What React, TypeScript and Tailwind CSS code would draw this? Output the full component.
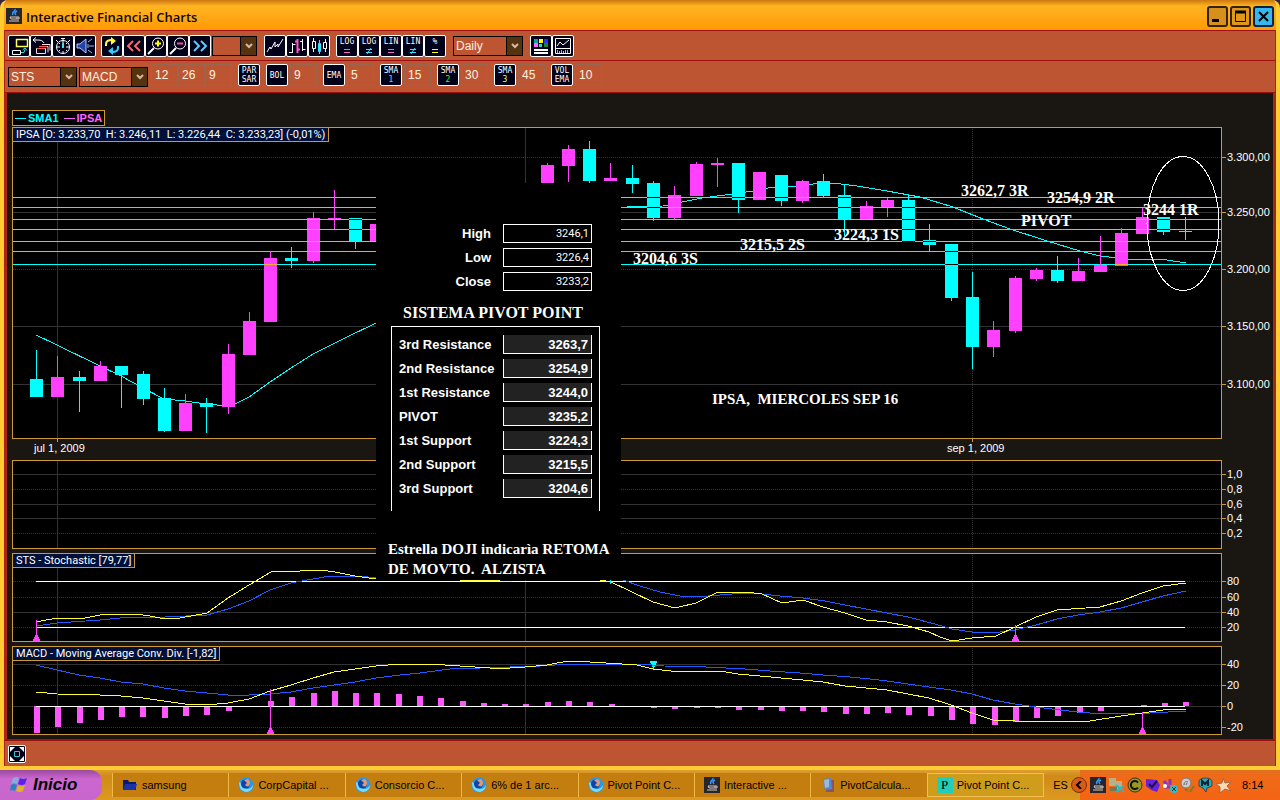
import type { ReactNode } from 'react';

const CYAN = '#00ffff';
const PINK = '#ff40ff';
const FRAME = '#cc9933';
const GRID = '#333333';
const YELLOW = '#ffff33';
const BLUE = '#1f5cff';

const START_X = 36;
const END_X = 1185;

// x, high, body top, body bottom, low, direction
type Candle = [number, number, number, number, number, 'u' | 'd'];

const CANDLES: Candle[] = [
  [36, 350, 379, 397, 397, 'd'],
  [57, 356, 377, 397, 397, 'u'],
  [79, 371, 377, 381, 412, 'd'],
  [100, 361, 366, 381, 381, 'u'],
  [121, 366, 366, 375, 408, 'd'],
  [143, 371, 374, 399, 405, 'd'],
  [164, 388, 398, 431, 432, 'd'],
  [185, 394, 403, 431, 431, 'u'],
  [206, 398, 403, 407, 433, 'd'],
  [228, 344, 354, 407, 414, 'u'],
  [249, 312, 321, 355, 355, 'u'],
  [270, 251, 258, 322, 322, 'u'],
  [291, 247, 258, 261, 268, 'd'],
  [313, 212, 218, 261, 263, 'u'],
  [334, 190, 218, 219, 229, 'u'],
  [355, 218, 218, 241, 249, 'd'],
  [376, 216, 224, 242, 242, 'u'],
  [547, 163, 165, 183, 183, 'u'],
  [568, 145, 149, 166, 182, 'u'],
  [589, 141, 149, 181, 183, 'd'],
  [610, 163, 178, 181, 181, 'u'],
  [632, 165, 178, 184, 193, 'd'],
  [653, 181, 183, 218, 221, 'd'],
  [674, 186, 195, 218, 219, 'u'],
  [696, 162, 164, 196, 196, 'u'],
  [717, 158, 163, 165, 187, 'u'],
  [738, 163, 163, 200, 213, 'd'],
  [759, 172, 172, 200, 200, 'u'],
  [781, 175, 175, 201, 206, 'd'],
  [802, 180, 181, 201, 203, 'u'],
  [823, 174, 181, 196, 198, 'd'],
  [844, 184, 195, 219, 236, 'd'],
  [866, 201, 206, 220, 220, 'u'],
  [887, 198, 200, 208, 217, 'u'],
  [908, 195, 200, 242, 242, 'd'],
  [929, 224, 240, 245, 251, 'd'],
  [951, 244, 244, 298, 301, 'd'],
  [972, 272, 297, 347, 369, 'd'],
  [993, 321, 330, 347, 357, 'u'],
  [1015, 276, 278, 331, 333, 'u'],
  [1036, 268, 270, 279, 281, 'u'],
  [1057, 256, 270, 281, 283, 'd'],
  [1078, 258, 271, 281, 281, 'u'],
  [1100, 236, 265, 272, 272, 'u'],
  [1121, 228, 233, 266, 266, 'u'],
  [1142, 208, 217, 234, 234, 'u'],
  [1163, 217, 217, 232, 235, 'd'],
  [1185, 217, 231, 232, 240, 'd'],
];

const PIVOT_LINES = [197, 207, 219, 229, 241, 251, 264];

const NOTES: [number, number, string][] = [
  [961, 196, '3262,7 3R'],
  [1047, 203, '3254,9 2R'],
  [1143, 215, '3244 1R'],
  [1021, 226, 'PIVOT'],
  [834, 240, '3224,3 1S'],
  [740, 250, '3215,5 2S'],
  [633, 264, '3204,6 3S'],
];

const SMA_LEFT =
  '36,335 57,345 100,366 121,376 143,388 164,399 185,401 206,404 228,406 237,403 249,397 270,382 291,368 313,354 345,338 376,323';
const SMA_RIGHT =
  '627,207 663,206 687,201 702,198 733,194 753,191 768,188 805,186 817,183 833,183 857,186 887,191 920,197 953,207 983,219 1010,229 1047,241 1080,251 1100,256 1127,259 1167,260 1186,263';

const STS_FAST = [
  '36,622 57,618 85,618 100,615 121,614 135,614 150,616 165,619 180,618 207,613 228,598 249,585 271,572 300,571 320,570 335,572 355,576 376,579',
  '460,580 498,580 500,581 512,581',
  '600,580 611,582 632,592 653,602 675,608 696,603 718,592 745,592 762,594 782,603 803,600 823,607 845,613 866,620 887,622 908,626 929,632 940,637 952,641 972,638 996,636 1015,627 1036,617 1057,610 1100,607 1121,601 1142,593 1163,586 1186,583',
];
const STS_SLOW = [
  '36,626 57,623 100,620 130,617 165,617 207,615 228,609 249,601 270,590 291,583 313,579 330,576 360,576 376,578',
  '623,580 640,586 660,592 680,596 696,597 720,595 745,593 762,594 780,596 803,598 825,601 845,605 866,609 887,613 908,617 935,624 952,629 972,632 993,633 1015,630 1036,625 1057,619 1078,615 1100,612 1121,608 1142,602 1163,596 1186,591',
];

const MACD_FAST = [
  '36,692 57,694 100,695 121,696 143,698 164,701 185,704 207,705 228,703 249,699 270,691 291,685 313,678 334,672 355,669 376,666 400,664 430,664 460,666 490,668 510,668 525,667 547,665 568,661 590,662 622,664 637,665 653,669 671,671 720,671 738,674 760,676 781,678 803,680 823,682 845,686 866,688 887,690 908,694 929,698 951,705 972,713 993,720 1015,721 1090,721 1121,716 1142,713 1163,710 1186,709',
];
const MACD_SLOW = [
  '36,665 57,670 79,675 100,678 121,682 143,684 164,688 185,691 207,693 228,695 249,695 270,694 291,692 313,688 334,685 355,682 376,678 400,675 420,673 450,669 480,668 510,667 540,666 570,664 640,664 664,666 706,667 745,669 770,671 800,673 823,675 850,677 870,679 887,681 908,684 929,687 951,690 972,694 993,700 1015,704 1036,707 1060,710 1078,712 1090,713 1150,713 1186,711',
];

// far edge of every histogram bar, the zero line lies at 706
const HISTOGRAM = [
  733, 727, 723, 720, 717, 717, 718, 716, 715, 711, 707, 701, 697, 693, 691, 693, 693, 694, 696, 698, 701, 703, 704, 704,
  702, 701, 702, 704, 706, 708, 709, 708, 708, 710, 710, 711, 711, 712, 714, 714, 713, 715, 716, 720, 724, 725, 722, 718,
  716, 713, 711, 707, 705, 703, 702,
];

type Tick = { y: number; label?: string; dotted?: boolean };

function Plot({ top, height, bottom, ticks, children }: { top: number; height: number; bottom: number; ticks: Tick[]; children?: ReactNode }) {
  return (
    <svg viewBox={`7 ${top} 1266 ${height}`} className="block h-auto w-full font-['Liberation_Sans',sans-serif] text-[11px]">
      <g shapeRendering="crispEdges" fill="none">
        <rect x={12.5} y={top + 0.5} width={1209} height={bottom - top} fill="#000000" />
        <path d={`M57.5 ${top}V${bottom}M525.5 ${top}V${bottom}`} stroke={GRID} />
        <path d={`M972.5 ${top}V${bottom}`} stroke={GRID} strokeDasharray="1 1" />
        {ticks.map((t) => (
          <g key={t.y}>
            <path d={`M13 ${t.y + 0.5}H1221`} stroke={GRID} strokeDasharray={t.dotted ? '1 1' : undefined} />
            <path d={`M1222 ${t.y + 0.5}h4`} stroke={FRAME} />
          </g>
        ))}
      </g>
      {children}
      <rect x={12.5} y={top + 0.5} width={1209} height={bottom - top} fill="none" stroke={FRAME} shapeRendering="crispEdges" />
      {ticks.map((t) => (
        <text key={t.y} x={1227} y={t.y + 4} fill="#ffffff">
          {t.label}
        </text>
      ))}
    </svg>
  );
}

function Curves({ points, color }: { points: string[]; color: string }) {
  return (
    <g fill="none" stroke={color} shapeRendering="crispEdges">
      {points.map((p) => (
        <polyline key={p} points={p} />
      ))}
    </g>
  );
}

function BuySignal({ x, from, base }: { x: number; from: number; base: number }) {
  return (
    <g shapeRendering="crispEdges" fill={PINK}>
      <rect x={x} y={from} width={1} height={base - from} />
      <path d={`M${x - 1} ${base - 6}h3v2h1v2h1v2h-7v-2h1v-2h1z`} />
    </g>
  );
}

function PriceChart() {
  const ticks = [
    { y: 157, label: '3.300,00', dotted: true },
    { y: 212, label: '3.250,00' },
    { y: 269, label: '3.200,00', dotted: true },
    { y: 326, label: '3.150,00' },
    { y: 384, label: '3.100,00' },
  ];
  return (
    <Plot top={127} height={333} bottom={438} ticks={ticks}>
      <g shapeRendering="crispEdges" fill="none">
        {PIVOT_LINES.map((y) => (
          <path key={y} d={`M13 ${y + 0.5}H1221`} stroke={CYAN} />
        ))}
        <polyline points={SMA_LEFT} stroke={CYAN} />
        <polyline points={SMA_RIGHT} stroke={CYAN} />
        {CANDLES.map(([x, high, open, close, low, dir]) => {
          const fill = dir === 'u' ? PINK : CYAN;
          return (
            <g key={x}>
              <rect x={x} y={high} width={1} height={low - high} fill={fill} />
              <rect x={x - 6} y={open} width={13} height={close - open} fill={fill} />
              {PIVOT_LINES.filter((y) => y >= open && y < close).map((y) => (
                <rect key={y} x={x - 6} y={y} width={13} height={1} fill={dir === 'u' ? '#ffaa33' : '#000000'} />
              ))}
            </g>
          );
        })}
        <ellipse cx={1183} cy={223.5} rx={36} ry={67} stroke="#ffffff" />
        <path d="M57.5 438v4M972.5 438v4" stroke={FRAME} />
      </g>
      <g fill="#ffffff">
        <text x={34} y={452}>jul 1, 2009</text>
        <text x={947} y={452}>sep 1, 2009</text>
      </g>
      <g fill="#ffffff" className="font-['Liberation_Serif',serif] text-[16px] font-bold">
        {NOTES.map(([x, y, text]) => (
          <text key={text} x={x} y={y}>
            {text}
          </text>
        ))}
        <text x={712} y={404} className="text-[15px] whitespace-pre">
          {'IPSA,  MIERCOLES SEP 16'}
        </text>
      </g>
    </Plot>
  );
}

function VolumeChart() {
  const ticks = [
    { y: 474, label: '1,0' },
    { y: 489, label: '0,8', dotted: true },
    { y: 504, label: '0,6' },
    { y: 518, label: '0,4' },
    { y: 533, label: '0,2', dotted: true },
  ];
  return <Plot top={460} height={93} bottom={548} ticks={ticks} />;
}

function StochasticChart() {
  const ticks = [
    { y: 581, label: '80', dotted: true },
    { y: 597, label: '60', dotted: true },
    { y: 612, label: '40' },
    { y: 627, label: '20', dotted: true },
  ];
  return (
    <Plot top={553} height={93} bottom={641} ticks={ticks}>
      <path d={`M${START_X} 581.5H${END_X}M${START_X} 627.5H${END_X}`} stroke="#ffffff" shapeRendering="crispEdges" />
      <Curves points={STS_SLOW} color={BLUE} />
      <Curves points={STS_FAST} color={YELLOW} />
      <rect x={610} y={580} width={1} height={4} fill={CYAN} />
      <BuySignal x={36} from={620} base={641} />
      <BuySignal x={1015} from={625} base={641} />
    </Plot>
  );
}

function MacdChart() {
  const ticks = [
    { y: 664, label: '40' },
    { y: 685, label: '20', dotted: true },
    { y: 706, label: '0' },
    { y: 727, label: '-20', dotted: true },
  ];
  return (
    <Plot top={646} height={93} bottom={734} ticks={ticks}>
      <g shapeRendering="crispEdges">
        {HISTOGRAM.map((y, i) => (
          <rect
            key={i}
            x={Math.round(34 + i * 21.28)}
            y={Math.min(y, 706)}
            width={6}
            height={Math.abs(y - 706)}
            fill="#ff55ff"
          />
        ))}
        <path d={`M${START_X} 706.5H${END_X}`} stroke="#ffffff" />
        <path d="M650 661h7v2h-1v2h-1v2h-1v2h-1v-2h-1v-2h-1v-2h-1z" fill={CYAN} />
      </g>
      <Curves points={MACD_SLOW} color={BLUE} />
      <Curves points={MACD_FAST} color={YELLOW} />
      <BuySignal x={270} from={689} base={734} />
      <BuySignal x={1142} from={712} base={734} />
    </Plot>
  );
}

function Panel({ title, children }: { title?: string; children: ReactNode }) {
  return (
    <div className="relative">
      {children}
      {title && (
        <span className="absolute top-0 left-[5px] h-[15px] border border-[#cc9933] bg-[#00103a] px-[3px] font-['Roboto',sans-serif] text-[11px] leading-[13px] whitespace-pre text-white">
          {title}
        </span>
      )}
    </div>
  );
}

const RESULTS = [
  ['3rd Resistance', '3263,7'],
  ['2nd Resistance', '3254,9'],
  ['1st Resistance', '3244,0'],
  ['PIVOT', '3235,2'],
  ['1st Support', '3224,3'],
  ['2nd Support', '3215,5'],
  ['3rd Support', '3204,6'],
];

const PRICES = [
  ['High', '3246,1'],
  ['Low', '3226,4'],
  ['Close', '3233,2'],
];

function PivotCalculator() {
  return (
    <div className="absolute top-[90px] left-[369px] h-[397px] w-[245px] bg-black pt-[41px] text-white">
      <div className="flex flex-col gap-[5px] pr-[29px]">
        {PRICES.map(([label, value]) => (
          <label key={label} className="flex h-[19px] items-center justify-end gap-3 text-[13px] leading-4 font-bold">
            {label}
            <input
              defaultValue={value}
              className="h-[19px] w-[89px] border border-white bg-black px-[2px] text-right font-['Roboto',sans-serif] text-[11px] font-normal outline-none"
            />
          </label>
        ))}
      </div>
      <h2 className="mt-3 pl-[27px] font-['Liberation_Serif',serif] text-[16px] leading-5 font-bold whitespace-nowrap">SISTEMA PIVOT POINT</h2>
      <div className="mt-[3px] ml-[15px] flex h-[185px] w-[209px] flex-col gap-[5px] border-x border-t border-white pt-2 pr-[7px] pl-[7px]">
        {RESULTS.map(([label, value]) => (
          <label key={label} className="flex h-[19px] items-center justify-between text-[13px] leading-4 font-bold">
            {label}
            <input
              readOnly
              value={value}
              className="h-[19px] w-[89px] border-x border-b border-white bg-[#222222] px-[3px] text-right text-[13px] font-bold outline-none"
            />
          </label>
        ))}
      </div>
      <p className="mt-7 pl-3 font-['Liberation_Serif',serif] text-[15px] leading-5 font-bold whitespace-pre">
        {'Estrella DOJI indicarìa RETOMA\nDE MOVTO.  ALZISTA'}
      </p>
    </div>
  );
}

function ToolButton({ label, children }: { label: string; children: ReactNode }) {
  return (
    <button
      type="button"
      aria-label={label}
      className="flex size-[22px] shrink-0 flex-col items-center justify-center rounded-xs border border-white bg-[#000018] font-['DejaVu_Sans_Mono',monospace] text-[8px] leading-[9px] text-white"
    >
      {children}
    </button>
  );
}

function Glyph({ children }: { children: ReactNode }) {
  return (
    <svg viewBox="0 0 20 20" className="size-5" fill="none" stroke="#ffffff">
      {children}
    </svg>
  );
}

function Picker({ label, value, className }: { label: string; value: string; className: string }) {
  return (
    <span className={`relative block h-[20px] shrink-0 border border-black ${className}`}>
      <select aria-label={label} className="block h-[18px] w-full appearance-none bg-transparent px-[2px] text-[12px] leading-[18px] text-[#fff2e0] outline-none">
        <option>{value}</option>
      </select>
      <span className="pointer-events-none absolute inset-y-0 right-0 flex w-4 items-center justify-center border-l border-black bg-[#553311]">
        <svg viewBox="0 0 8 6" className="h-[6px] w-2" fill="none" stroke="#d8b8a0" strokeWidth="2">
          <path d="M1 1l3 3 3-3" />
        </svg>
      </span>
    </span>
  );
}

function NumberField({ label, value }: { label: string; value: string }) {
  return (
    <input
      aria-label={label}
      defaultValue={value}
      className="h-[22px] w-[27px] border border-[#99664d] bg-transparent px-[3px] text-[12px] text-[#fff2e0] outline-none"
    />
  );
}

function LogGlyph({ text, sign }: { text: string; sign: '=' | '≠' }) {
  return (
    <>
      <span>{text}</span>
      <svg viewBox="0 0 8 6" className="mt-[2px] h-[6px] w-2" fill="none" stroke={sign === '=' ? (text === '%' ? '#ffff00' : '#ff66cc') : '#33e6ff'}>
        <path d="M1 1.5h6M1 4.5h6" />
        {sign === '≠' && <path d="M2 6l4-6" />}
      </svg>
    </>
  );
}

function MainToolbar() {
  return (
    <div className="flex h-[30px] items-center border-t border-[#a01010] bg-[#bd5532] pl-[3px]">
      <div className="flex">
        <ToolButton label="Open window">
          <Glyph>
            <path d="M7.5 3.5h11v7h-11z" stroke="#ffff55" strokeWidth="1.500" />
            <path d="M3.5 14.500h8v4h-8z" />
            <path d="M12 16.500h3l1-3M13.500 14l2.500-2 2 2.500" stroke="#33e6e6" />
          </Glyph>
        </ToolButton>
        <ToolButton label="Close windows">
          <Glyph>
            <path d="M2 4h5c3 0 5 1 6 3M5 1.500l-3 2.500 3 2.500" />
            <path d="M5.500 17.500v-5h9v5zM8 10.500h9v6M11 8.500h8v6" stroke="#ffdddd" />
            <path d="M6 12.500h8M8 10.500h8" stroke="#ff5555" />
          </Glyph>
        </ToolButton>
        <ToolButton label="Timer">
          <Glyph>
            <circle cx="10" cy="11" r="6.500" />
            <path d="M8 2.500h4M10 3v4M3 4l2 2M17 4l-2 2M4 11h3M13 11h3M10 15v3M6 7l1 1M14 7l-1 1M6 15l1-1M14 15l-1-1" />
            <path d="M10 12V7" stroke="#33e6e6" strokeWidth="2" />
          </Glyph>
        </ToolButton>
        <ToolButton label="Sound">
          <Glyph>
            <path d="M2 8h3l6-5v14l-6-5H2z" fill="#2244aa" stroke="#aaccff" />
            <path d="M13 6l4-3M14 10h5M13 14l4 3M13 8v4" stroke="#99bbff" />
          </Glyph>
        </ToolButton>
      </div>
      <div className="ml-[5px] flex">
        <ToolButton label="Refresh">
          <Glyph>
            <path d="M4 10V8c0-3 3-4 6-4" stroke="#ffff33" strokeWidth="2" />
            <path d="M9 1l5 4-5 4z" fill="#ffff33" stroke="none" />
            <path d="M16 10v2c0 3-3 4-6 4" stroke="#33ccff" strokeWidth="2" />
            <path d="M11 11l-5 4 5 4z" fill="#33ccff" stroke="none" />
          </Glyph>
        </ToolButton>
        <ToolButton label="Back">
          <Glyph>
            <path d="M9 5l-5 5 5 5M16 5l-5 5 5 5" stroke="#ff6666" strokeWidth="2" />
          </Glyph>
        </ToolButton>
        <ToolButton label="Zoom in">
          <Glyph>
            <circle cx="12" cy="7.500" r="5.500" />
            <path d="M8 12l-6 6" strokeWidth="2" />
            <path d="M9 7.500h6M12 4.500v6" stroke="#ffff00" strokeWidth="2" />
          </Glyph>
        </ToolButton>
        <ToolButton label="Zoom out">
          <Glyph>
            <circle cx="12" cy="7.500" r="5.500" />
            <path d="M8 12l-6 6" strokeWidth="2" />
            <path d="M9 7.500h6" stroke="#ff44aa" strokeWidth="2" />
          </Glyph>
        </ToolButton>
        <ToolButton label="Forward">
          <Glyph>
            <path d="M4 5l5 5-5 5M11 5l5 5-5 5" stroke="#55ccff" strokeWidth="2" />
          </Glyph>
        </ToolButton>
      </div>
      <Picker label="Range" value="" className="ml-[1px] w-[45px]" />
      <div className="ml-[7px] flex">
        <ToolButton label="Line chart">
          <Glyph>
            <path d="M2 16l3-5 1 2 4-7v5l3-3v3l5-8" />
          </Glyph>
        </ToolButton>
        <ToolButton label="Bar chart">
          <Glyph>
            <path d="M5.500 7v10M2 16.500h3M5.500 8.500h3M15.500 3v12M13 5.500h3M15.500 13.500h3" />
            <path d="M10.500 3v14M8 5.500h2M11 13.500h2" stroke="#ff55cc" strokeWidth="2" />
          </Glyph>
        </ToolButton>
        <ToolButton label="Candle chart">
          <Glyph>
            <path d="M4.500 2v3M4.500 13v3M3.500 5.500h3v7h-3zM16.500 3v3M16.500 13v3M14.500 6.500h3v6h-3z" />
            <path d="M10.500 4v14" stroke="#33e6ff" />
            <path d="M9.500 7.500h2v8h-2z" fill="#33e6ff" stroke="#33e6ff" />
          </Glyph>
        </ToolButton>
      </div>
      <div className="ml-[6px] flex">
        <ToolButton label="Log scale">
          <LogGlyph text="LOG" sign="=" />
        </ToolButton>
        <ToolButton label="Log scale, free">
          <LogGlyph text="LOG" sign="≠" />
        </ToolButton>
        <ToolButton label="Linear scale">
          <LogGlyph text="LIN" sign="=" />
        </ToolButton>
        <ToolButton label="Linear scale, free">
          <LogGlyph text="LIN" sign="≠" />
        </ToolButton>
        <ToolButton label="Percent scale">
          <LogGlyph text="%" sign="=" />
        </ToolButton>
      </div>
      <Picker label="Period" value="Daily" className="ml-[7px] w-[70px]" />
      <div className="ml-[7px] flex">
        <ToolButton label="Colors">
          <Glyph>
            <g stroke="none">
              <path fill="#11a0a0" d="M3 3h4v4H3z" />
              <path fill="#ffff00" d="M8 3h4v4H8z" />
              <path fill="#2233ff" d="M13 3h4v4h-4z" />
              <path fill="#ff66ff" d="M3 7h4v4H3z" />
              <path fill="#22dddd" d="M8 8h3v3H8z" />
              <path fill="#118833" d="M13 7h4v4h-4z" />
              <path fill="#ffffff" d="M3 13h14v2H3zM3 16h14v2H3z" />
            </g>
          </Glyph>
        </ToolButton>
        <ToolButton label="Indicators">
          <Glyph>
            <path d="M2.500 2.500h15v15h-15zM4 10l3-4 3 3 6-5M3 12.500h14" />
            <path d="M4.500 17v-3M6.500 17v-2M8.500 17v-3M10.500 17v-2M12.500 17v-3M14.500 17v-3" stroke="#33e6ff" />
          </Glyph>
        </ToolButton>
      </div>
    </div>
  );
}

const STUDIES = [
  { top: 'BOL', value: '9' },
  { top: 'EMA', value: '5' },
  { top: 'SMA', bottom: '1', color: 'text-[#33e6ff]', value: '15' },
  { top: 'SMA', bottom: '2', color: 'text-[#33ff33]', value: '30' },
  { top: 'SMA', bottom: '3', color: 'text-[#ffff33]', value: '45' },
  { top: 'VOL', bottom: 'EMA', color: 'text-white', value: '10' },
];

function StudyToolbar() {
  return (
    <div className="flex h-[33px] items-start border-y border-[#a01010] bg-[#bd5532] pt-[3px] pl-[3px]">
      <div className="flex gap-[2px] pt-[3px]">
        <Picker label="First indicator" value="STS" className="w-[69px]" />
        <Picker label="Second indicator" value="MACD" className="w-[69px]" />
      </div>
      <div className="ml-[3px] flex">
        <NumberField label="Fast" value="12" />
        <NumberField label="Slow" value="26" />
        <NumberField label="Signal" value="9" />
      </div>
      <div className="ml-[6px] flex gap-[6px]">
        <ToolButton label="Parabolic SAR">
          <span>PAR</span>
          <span>SAR</span>
        </ToolButton>
        {STUDIES.map((s) => (
          <div key={s.top + s.value} className="flex gap-[2px]">
            <ToolButton label={`${s.top} ${s.bottom ?? ''}`}>
              <span>{s.top}</span>
              {s.bottom && <span className={s.color}>{s.bottom}</span>}
            </ToolButton>
            <NumberField label={`${s.top} ${s.bottom ?? ''} period`} value={s.value} />
          </div>
        ))}
      </div>
    </div>
  );
}

function JavaIcon() {
  return (
    <svg viewBox="0 0 16 16" className="size-4 shrink-0" fill="none">
      <path d="M0 0h16v16H0z" fill="#26262e" />
      <path d="M9 1c1 2-4 3-2 6M11 3c-2 1-3 2-1 4" stroke="#3399ff" strokeWidth="1.500" />
      <path d="M4 9h7v2H5zM11 9h2v2h-2M3 13h10" stroke="#d8c8b8" />
    </svg>
  );
}

function TitleBar() {
  return (
    <header className="flex h-[30px] items-center bg-linear-to-b from-[#cc7711] via-[#ffb422] via-20% to-[#ff9900] pr-[2px] pl-[2px]">
      <span className="mt-[2px] flex">
        <JavaIcon />
      </span>
      <h1 className="mt-1 ml-1 flex-1 font-['Open_Sans',sans-serif] text-[13px] leading-5 font-semibold text-[#110800]">Interactive Financial Charts</h1>
      <div className="mt-[2px] flex gap-[2px]">
        <button type="button" aria-label="Minimize" className="size-[21px] rounded-[3px] border-2 border-[#332200] bg-[#d8901c]">
          <svg viewBox="0 0 17 17" className="size-[17px]">
            <path d="M3 11h7v3H3z" />
          </svg>
        </button>
        <button type="button" aria-label="Maximize" className="size-[21px] rounded-[3px] border-2 border-[#332200] bg-[#e0981c]">
          <svg viewBox="0 0 17 17" className="size-[17px]" fill="none" stroke="#000000">
            <path d="M3.500 3.500h10v10h-10z" />
            <path d="M3 4h11" strokeWidth="3" />
          </svg>
        </button>
        <button type="button" aria-label="Close" className="size-[21px] rounded-[3px] border-2 border-[#002244] bg-[#33b8f0]">
          <svg viewBox="0 0 17 17" className="size-[17px]" stroke="#000000" strokeWidth="2">
            <path d="M4 4l9 9M13 4l-9 9" />
          </svg>
        </button>
      </div>
    </header>
  );
}

function FirefoxIcon() {
  return (
    <svg viewBox="0 0 16 16" className="size-4">
      <circle cx="8" cy="8" r="7.500" fill="#2299ee" />
      <path d="M1 5c0 6 2 9 7 10 4 0 7-3 7-7-2 4-6 5-8 3-3-1-3-5-6-6z" fill="#77ddff" />
      <circle cx="7.500" cy="7" r="4.500" fill="#1144aa" />
      <path d="M6 3l4-1c2 2 3 4 1 7-2 1-3 0-4-1l2-2z" fill="#dd9977" />
    </svg>
  );
}

function FolderIcon() {
  return (
    <svg viewBox="0 0 16 16" className="size-4">
      <path d="M1 3h5l1 2h7v8H1z" fill="#0a1a66" />
      <path d="M3 7h12l-2 6H1z" fill="#1a33aa" />
    </svg>
  );
}

function NotepadIcon() {
  return (
    <svg viewBox="0 0 16 16" className="size-4">
      <path d="M6 3h8v12H6z" fill="#885566" />
      <path d="M3 2l8-1 1 11-7 1z" fill="#5588cc" />
      <path d="M4 3l5-1v8l-4 1z" fill="#99bbdd" />
    </svg>
  );
}

function PivotIcon() {
  return <span className="flex size-4 items-center justify-center bg-[#22ccbb] font-['Liberation_Serif',serif] text-[13px] leading-4 text-black">P</span>;
}

const TASKS = [
  { icon: <FolderIcon />, title: 'samsung' },
  { icon: <FirefoxIcon />, title: 'CorpCapital ...' },
  { icon: <FirefoxIcon />, title: 'Consorcio C...' },
  { icon: <FirefoxIcon />, title: '6% de 1 arc...' },
  { icon: <FirefoxIcon />, title: 'Pivot Point C...' },
  { icon: <JavaIcon />, title: 'Interactive ...' },
  { icon: <NotepadIcon />, title: 'PivotCalcula...' },
  { icon: <PivotIcon />, title: 'Pivot Point C...', active: true },
];

function TrayIcons() {
  return (
    <svg viewBox="0 0 126 16" className="h-4 w-[126px]">
      <path d="M1 1h7v8H1zM8 4h6v8H8z" fill="#b8b088" />
      <path d="M2 10h7v4H2z" fill="#777755" />
      <path d="M8 8l8 7M16 8l-8 7" stroke="#22bbcc" strokeWidth="2" />
      <circle cx="27" cy="8" r="7" fill="#999922" stroke="#333311" />
      <path d="M30 5.500a4 4 0 1 0 0 5" fill="none" stroke="#111111" strokeWidth="2" />
      <path d="M38 2l11 1 3 5-3 7-6-2-5-4z" fill="#6622dd" />
      <path d="M41 7l3 3 5-6" stroke="#221144" fill="none" strokeWidth="2" />
      <path d="M56 4l3 4M62 2v6M56 10h6" stroke="#8833cc" strokeWidth="3" />
      <circle cx="57" cy="9" r="2" fill="#ffffff" />
      <circle cx="66" cy="12" r="4" fill="#33bbcc" />
      <path d="M64 10l4 4M68 10l-4 4" stroke="#113333" />
      <circle cx="78" cy="6" r="5" fill="#cccccc" stroke="#777777" />
      <path d="M76 8c0-3 2-4 4-3M78 8l1-2" fill="none" stroke="#666666" />
      <path d="M77 12l3 2M86 9l-4 6" stroke="#887722" strokeWidth="2" />
      <path d="M91 5q0-4 6.500-4t6.500 4v4l-5 2-1 4-3-4-4-2z" fill="#22aabb" stroke="#444444" />
      <path d="M94 9V4l3 3 3-3v5" fill="none" stroke="#112233" strokeWidth="2" />
      <path d="M115 1l2 5 6-1-4 4 4 5-6-2-5 4v-6l-4-3 6-1z" fill="#ffd8b0" stroke="#aa6644" />
    </svg>
  );
}

function Taskbar() {
  return (
    <footer className="flex h-[30px] items-stretch bg-linear-to-b from-[#e0a030] via-[#cf8a18] via-20% to-[#dd9a20] text-[11px] text-black">
      <button
        type="button"
        className="flex w-[102px] shrink-0 items-center gap-[5px] rounded-r-xl bg-linear-to-b from-[#9a4aa0] via-[#cc66d0] via-30% to-[#c866cc] pl-[10px] text-[17px] leading-5 font-bold italic"
      >
        <svg viewBox="0 0 18 18" className="size-[18px]">
          <path d="M3 2q3-2 6 0L7 8Q4 6 1 8z" fill="#88aadd" />
          <path d="M10 2q3 2 7 0l-2 6q-3 2-7 0z" fill="#5522ee" />
          <path d="M1 9q3-2 6 0l-2 6q-3-2-5 0z" fill="#2288bb" />
          <path d="M8 9q3 2 7 0l-2 6q-3 2-7 0z" fill="#e0b030" />
        </svg>
        Inicio
      </button>
      <nav className="ml-[10px] flex flex-1 py-[3px]">
        {TASKS.map((task) => (
          <button
            key={task.title + String(task.active)}
            type="button"
            className={`flex flex-1 items-center gap-1 border-l pl-[9px] whitespace-nowrap ${
              task.active ? 'border border-[#f0c050] bg-[#d09c1c]' : 'border-[#f0b848] bg-[#c47e10]'
            }`}
          >
            {task.icon}
            {task.title}
          </button>
        ))}
      </nav>
      <span className="flex w-9 items-center justify-center pr-[3px]">ES</span>
      <div className="relative flex w-[200px] shrink-0 items-center bg-linear-to-b from-[#e07020] via-[#f06a18] via-20% to-[#f46414] pl-[10px]">
        <button type="button" aria-label="Show hidden icons" className="absolute top-[7px] -left-[9px] flex size-4 items-center justify-center rounded-full border border-[#773300] bg-[#d85a18]">
          <svg viewBox="0 0 8 8" className="size-2" fill="none" stroke="#000000" strokeWidth="2">
            <path d="M6 0L2 4l4 4" />
          </svg>
        </button>
        <JavaIcon />
        <span className="ml-[2px]">
          <TrayIcons />
        </span>
        <span className="ml-2">8:14</span>
      </div>
    </footer>
  );
}

export default function App() {
  return (
    <div className="flex min-h-screen flex-col bg-[#332244] font-['Liberation_Sans',sans-serif]">
      <div className="flex-1 overflow-hidden rounded-t-lg border-x-4 border-b-4 border-[#ffcc33] bg-[#bd5532]">
        <TitleBar />
        <main className="border-x border-[#b02010]">
          <MainToolbar />
          <StudyToolbar />
          <section className="relative border-x-2 border-[#a82818] bg-[#1a1713]">
            <div className="flex h-[34px] items-end pb-[1px] pl-[5px]">
              <div className="flex h-4 items-center gap-[5px] border border-[#cc9933] bg-black px-[2px] text-[11px] leading-[14px] font-bold">
                <span className="flex items-center gap-[2px] text-[#00ffff]">
                  <i className="h-px w-[11px] bg-[#00ffff]" />
                  SMA1
                </span>
                <span className="flex items-center gap-[2px] text-[#ff66ff]">
                  <i className="h-px w-[11px] bg-[#ff66ff]" />
                  IPSA
                </span>
              </div>
            </div>
            <Panel title="IPSA [O: 3.233,70  H: 3.246,11  L: 3.226,44  C: 3.233,23] (-0,01%)">
              <PriceChart />
            </Panel>
            <Panel>
              <VolumeChart />
            </Panel>
            <Panel title="STS - Stochastic [79,77]">
              <StochasticChart />
            </Panel>
            <Panel title="MACD - Moving Average Conv. Div. [-1,82]">
              <MacdChart />
            </Panel>
            <PivotCalculator />
          </section>
          <div className="flex h-[27px] items-center border-t-2 border-[#a01010] pl-[3px]">
            <button type="button" aria-label="Full screen" className="flex size-[18px] items-center justify-center rounded-xs border border-white bg-[#000018]">
              <svg viewBox="0 0 14 14" className="size-[14px]" fill="#ffffff">
                <path d="M0 0h5L0 5zM14 0v5L9 0zM0 14V9l5 5zM14 14H9l5-5z" />
                <path d="M4.500 4.500h5v5h-5z" fill="none" stroke="#33cccc" />
              </svg>
            </button>
          </div>
        </main>
      </div>
      <Taskbar />
    </div>
  );
}
